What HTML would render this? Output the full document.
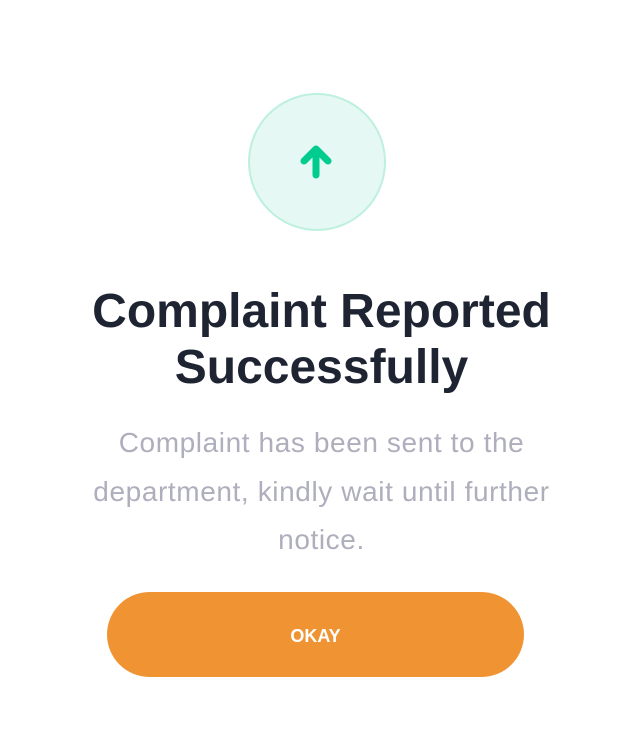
<!DOCTYPE html>
<html><head><style>
body{margin:0;width:643px;height:745px;background:#fff;font-family:"Liberation Sans",sans-serif;position:relative;overflow:hidden}
.c{position:absolute;left:248px;top:93px;width:134px;height:134px;border-radius:50%;background:#e5f8f3;border:2px solid #bdf0de}
h1{position:absolute;top:284px;left:0;width:643px;margin:0;text-align:center;font-size:48px;line-height:56px;color:#1f2433;font-weight:bold}
p{position:absolute;top:419px;left:0;width:643px;margin:0;text-align:center;font-size:28px;letter-spacing:0.6px;line-height:48.5px;color:#aeaebd;white-space:nowrap}
.b{position:absolute;left:107px;top:592px;width:417px;height:85px;border-radius:43px;background:#f09433;color:#fff;font-weight:bold;font-size:18px;text-align:center;line-height:89px}
</style></head><body>
<div class="c"></div>
<svg style="position:absolute;left:0;top:0" width="643" height="745"><path d="M316 175V150M304 161L316 149L328 161" fill="none" stroke="#00cc8f" stroke-width="7" stroke-linecap="round" stroke-linejoin="round"/></svg>
<h1>Complaint Reported<br>Successfully</h1>
<p>Complaint has been sent to the<br>department, kindly wait until further<br>notice.</p>
<div class="b">OKAY</div>
</body></html>
